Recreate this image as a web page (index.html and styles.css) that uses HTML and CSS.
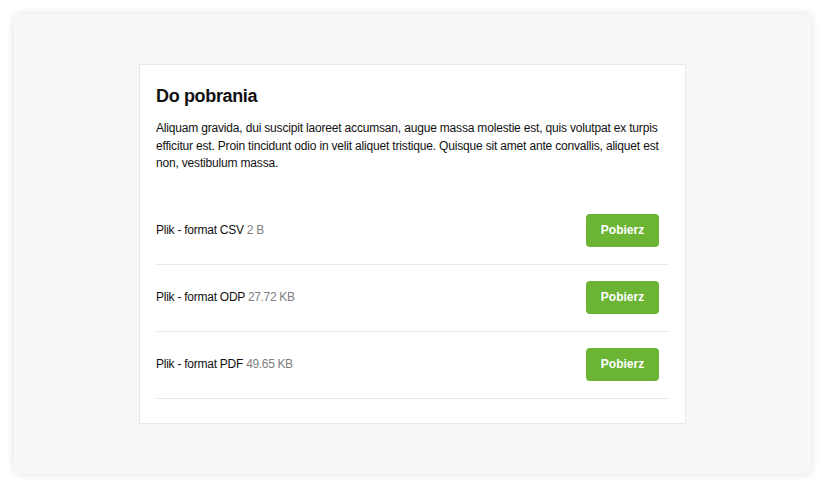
FILE: index.html
```html
<!DOCTYPE html>
<html lang="pl">
<head>
<meta charset="utf-8">
<title>Do pobrania</title>
<link rel="stylesheet" href="styles.css">
</head>
<body>
<div class="frame">
  <section class="card">
    <h2 class="title">Do pobrania</h2>
    <p class="intro">Aliquam gravida, dui suscipit laoreet accumsan, augue massa molestie est, quis volutpat ex turpis efficitur est. Proin tincidunt odio in velit aliquet tristique. Quisque sit amet ante convallis, aliquet est non, vestibulum massa.</p>
    <ul class="files">
      <li class="file">
        <span class="file-name">Plik - format CSV <span class="file-size">2 B</span></span>
        <a class="btn" href="#">Pobierz</a>
      </li>
      <li class="file">
        <span class="file-name">Plik - format ODP <span class="file-size">27.72 KB</span></span>
        <a class="btn" href="#">Pobierz</a>
      </li>
      <li class="file">
        <span class="file-name">Plik - format PDF <span class="file-size">49.65 KB</span></span>
        <a class="btn" href="#">Pobierz</a>
      </li>
    </ul>
  </section>
</div>
</body>
</html>
```

FILE: styles.css
```css
* { box-sizing: border-box; }

html, body {
  margin: 0;
  padding: 0;
  background: #ffffff;
  font-family: "Liberation Sans", Arial, sans-serif;
  color: #111;
}

.frame {
  margin: 14px;
  width: 797px;
  height: 460px;
  padding-top: 50px;
  background: #f7f7f7;
  border-radius: 8px;
  box-shadow: 0 0 10px rgba(0, 0, 0, 0.13);
}

.card {
  width: 547px;
  margin: 0 auto;
  background: #ffffff;
  border: 1px solid #e8e8e8;
  padding: 16px 16px 24px;
}

.title {
  margin: 5px 0 13px;
  font-size: 18px;
  font-weight: bold;
  color: #111;
  line-height: 21px;
  letter-spacing: -0.35px;
}

.intro {
  margin: 0 0 25px;
  font-size: 12px;
  line-height: 17.5px;
  letter-spacing: -0.18px;
  color: #111;
}

.files {
  list-style: none;
  margin: 0;
  padding: 0;
}

.file {
  display: flex;
  align-items: center;
  justify-content: space-between;
  padding: 16px 10px 17px 0;
  border-bottom: 1px solid #e9e9e9;
}

.file-name {
  font-size: 12px;
  letter-spacing: -0.25px;
  color: #111;
}

.file-size {
  color: #808080;
  letter-spacing: -0.35px;
}

.btn {
  display: flex;
  align-items: center;
  justify-content: center;
  width: 73px;
  height: 33px;
  background: #6bb434;
  color: #ffffff;
  font-size: 12px;
  font-weight: bold;
  text-decoration: none;
  border-radius: 4px;
}
```
